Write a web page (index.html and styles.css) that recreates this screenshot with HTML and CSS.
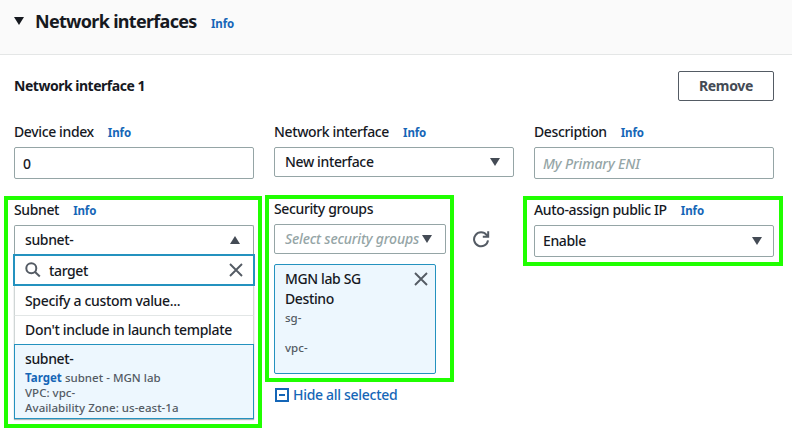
FILE: index.html
```html
<!DOCTYPE html>
<html lang="en">
<head>
<meta charset="utf-8">
<title>Network interfaces</title>
<link rel="stylesheet" href="styles.css">
</head>
<body>
<header class="section-header">
  <svg class="toggle" width="12" height="10" viewBox="0 0 12 10"><path d="M1 1h10L6 9z" fill="#16191f"/></svg>
  <h2 class="title">Network interfaces</h2>
  <a class="info info-title">Info</a>
</header>
<main class="content">
  <div class="interface-head">
    <h3 class="interface-name">Network interface 1</h3>
    <button class="remove">Remove</button>
  </div>
  <div class="fields">
    <div class="field">
      <div class="label"><span>Device index</span><a class="info">Info</a></div>
      <div class="box input">0</div>
    </div>
    <div class="field">
      <div class="label"><span>Network interface</span><a class="info">Info</a></div>
      <div class="box select"><span>New interface</span><svg class="caret" width="12" height="10" viewBox="0 0 12 10"><path d="M1 1h10L6 9z"/></svg></div>
    </div>
    <div class="field">
      <div class="label"><span>Description</span><a class="info">Info</a></div>
      <div class="box input placeholder"><span class="eni">My Primary ENI</span></div>
    </div>

    <div class="field marked mark-subnet">
      <div class="label"><span>Subnet</span><a class="info">Info</a></div>
      <div class="box select select-open"><span>subnet-</span><svg class="caret" width="12" height="10" viewBox="0 0 12 10"><path d="M1 9h10L6 1z"/></svg></div>
      <div class="search">
        <svg width="16" height="16" viewBox="0 0 16 16" class="stroke"><circle cx="6.3" cy="6.3" r="5"/><path d="M9.8 9.8l5 4.7"/></svg>
        <span class="query">target</span>
        <svg width="14" height="14" viewBox="0 0 14 14" class="stroke thin"><path d="M1 1l12 12M13 1L1 13"/></svg>
      </div>
      <div class="options">
        <div class="option">Specify a custom value...</div>
        <div class="option option-ruled">Don't include in launch template</div>
        <div class="option-selected">
          <div class="option-title">subnet-</div>
          <div class="meta"><b>Target</b> subnet - MGN lab</div>
          <div class="meta">VPC: vpc-</div>
          <div class="meta">Availability Zone: us-east-1a</div>
        </div>
      </div>
    </div>

    <div class="field groups marked mark-groups">
      <div class="label"><span>Security groups</span></div>
      <div class="group-row">
        <div class="box select group-select placeholder"><span>Select security groups</span><svg class="caret" width="12" height="10" viewBox="0 0 12 10"><path d="M1 1h10L6 9z"/></svg></div>
        <svg class="refresh" width="18" height="18" viewBox="0 0 18 18"><path d="M16 10.3A7 7 0 1 1 14.6 5L16 6.4M16.2 1.3v5.4h-5.4"/></svg>
      </div>
      <div class="token">
        <div class="token-head">
          <div class="token-title">MGN lab SG<br>Destino</div>
          <svg width="14" height="14" viewBox="0 0 14 14" class="stroke thin"><path d="M1 1l12 12M13 1L1 13"/></svg>
        </div>
        <div class="meta">sg-</div>
        <div class="meta token-vpc">vpc-</div>
      </div>
      <a class="hide">
        <svg width="14" height="14" viewBox="0 0 14 14"><path d="M1 1h12v12H1zM4 7h6"/></svg>
        <span>Hide all selected</span>
      </a>
    </div>

    <div class="field marked mark-ip">
      <div class="label"><span>Auto-assign public IP</span><a class="info">Info</a></div>
      <div class="box select select-tall"><span>Enable</span><svg class="caret" width="12" height="10" viewBox="0 0 12 10"><path d="M1 1h10L6 9z"/></svg></div>
    </div>
  </div>
</main>
</body>
</html>
```
FILE: styles.css
```css
*, *::before { box-sizing: border-box; }
body {
  margin: 0;
  height: 430px;
  overflow: hidden;
  background: #fff;
  color: #16191f;
  font: 500 14px/20px "Noto Sans", sans-serif;
  letter-spacing: -0.37px;
  white-space: nowrap;
}
svg { display: block; flex: none; }
h2, h3 { margin: 0; }
.section-header {
  display: flex;
  height: 55px;
  padding: 9px 13px;
  background: #fafafa;
  border-bottom: 1px solid #e4e6e6;
}
.toggle { margin: 7px 10px 0 0; }
.title { width: 162px; font-size: 18px; line-height: 25px; letter-spacing: -0.7px; }
.info { color: #1566b7; font-size: 11.5px; font-weight: 700; letter-spacing: -0.1px; }
.info-title { margin: 5px 0 0 14px; }
.content { padding: 16px 18px 0 14px; }
.interface-head { display: flex; justify-content: space-between; height: 51px; }
.interface-name { font-size: 14px; line-height: 30px; letter-spacing: -0.48px; }
.remove {
  width: 96px;
  height: 30px;
  padding: 0;
  border: 1px solid #545b64;
  border-radius: 2px;
  background: #fff;
  color: #444b55;
  font: 700 14px/28px "Noto Sans", sans-serif;
  letter-spacing: -0.35px;
}
.fields { display: grid; grid-template-columns: repeat(3, 240px); gap: 21px 20px; align-items: start; }
.field { position: relative; }
.label { display: flex; height: 25px; }
.label .info { margin-left: 14px; line-height: 22px; }
.box {
  display: flex;
  align-items: center;
  height: 32px;
  border: 1px solid #95a5a6;
  border-radius: 2px;
  padding: 2px 8px 0;
  background: #fff;
}
.select { height: 30px; justify-content: space-between; padding: 0 12px 0 10px; }
.select-tall { height: 32px; padding: 0 10px 0 8px; }
.select-open { border-bottom: 0; height: 29px; border-radius: 2px 2px 0 0; }
.group-select { width: 172px; }
.caret { fill: #444b55; }
.placeholder { color: #95a5a6; font-style: italic; letter-spacing: -0.16px; }
.eni { letter-spacing: -0.12px; }
.stroke { fill: none; stroke: #545b64; stroke-width: 2; }
.thin { stroke-width: 1.9; }
.search {
  display: flex;
  align-items: center;
  height: 32px;
  margin: 0 -1px;
  padding: 0 10px;
  border: 2px solid #2492bf;
}
.query { flex: 1; margin-left: 8px; padding-top: 1px; }
.options { box-shadow: 0 1px 1px #aab7b8; }
.option { height: 29px; padding: 0 10px; line-height: 29px; border: solid #d0d6d6; border-width: 0 1px; letter-spacing: -0.33px; }
.option-ruled { border-top: 1px solid #e2e6e6; line-height: 27px; }
.option-selected { height: 75px; padding: 3px 10px; border: 1px solid #2492bf; background: #edf7fe; }
.option-title { height: 22px; line-height: 21px; }
.meta { color: #545b64; font-size: 11.5px; line-height: 15px; letter-spacing: 0.02px; }
.meta b { color: #1566b7; }
.marked::before { content: ""; position: absolute; border: 4px solid #20ff00; pointer-events: none; }
.mark-subnet::before { left: -10px; top: -4px; width: 258px; height: 232px; }
.mark-groups::before { left: -9px; top: -4px; width: 189px; height: 187px; }
.mark-ip::before { left: -11px; top: -4px; width: 260px; height: 70px; }
.groups { margin-top: -1px; }
.group-row { display: flex; align-items: center; }
.refresh { margin-left: 26px; fill: none; stroke: #545b64; stroke-width: 2; }
.token { width: 162px; height: 110px; margin-top: 10px; padding: 4px 7px 0 10px; border: 1px solid #2492bf; border-radius: 2px; background: #edf7fe; }
.token-head { display: flex; justify-content: space-between; height: 41px; }
.token-head svg { margin-top: 3px; }
.token-vpc { margin-top: 15px; }
.hide { display: flex; align-items: center; margin: 11px 0 0 1px; gap: 4px; color: #1566b7; letter-spacing: -0.3px; }
.hide svg { fill: none; stroke: #1566b7; stroke-width: 2; }
```
